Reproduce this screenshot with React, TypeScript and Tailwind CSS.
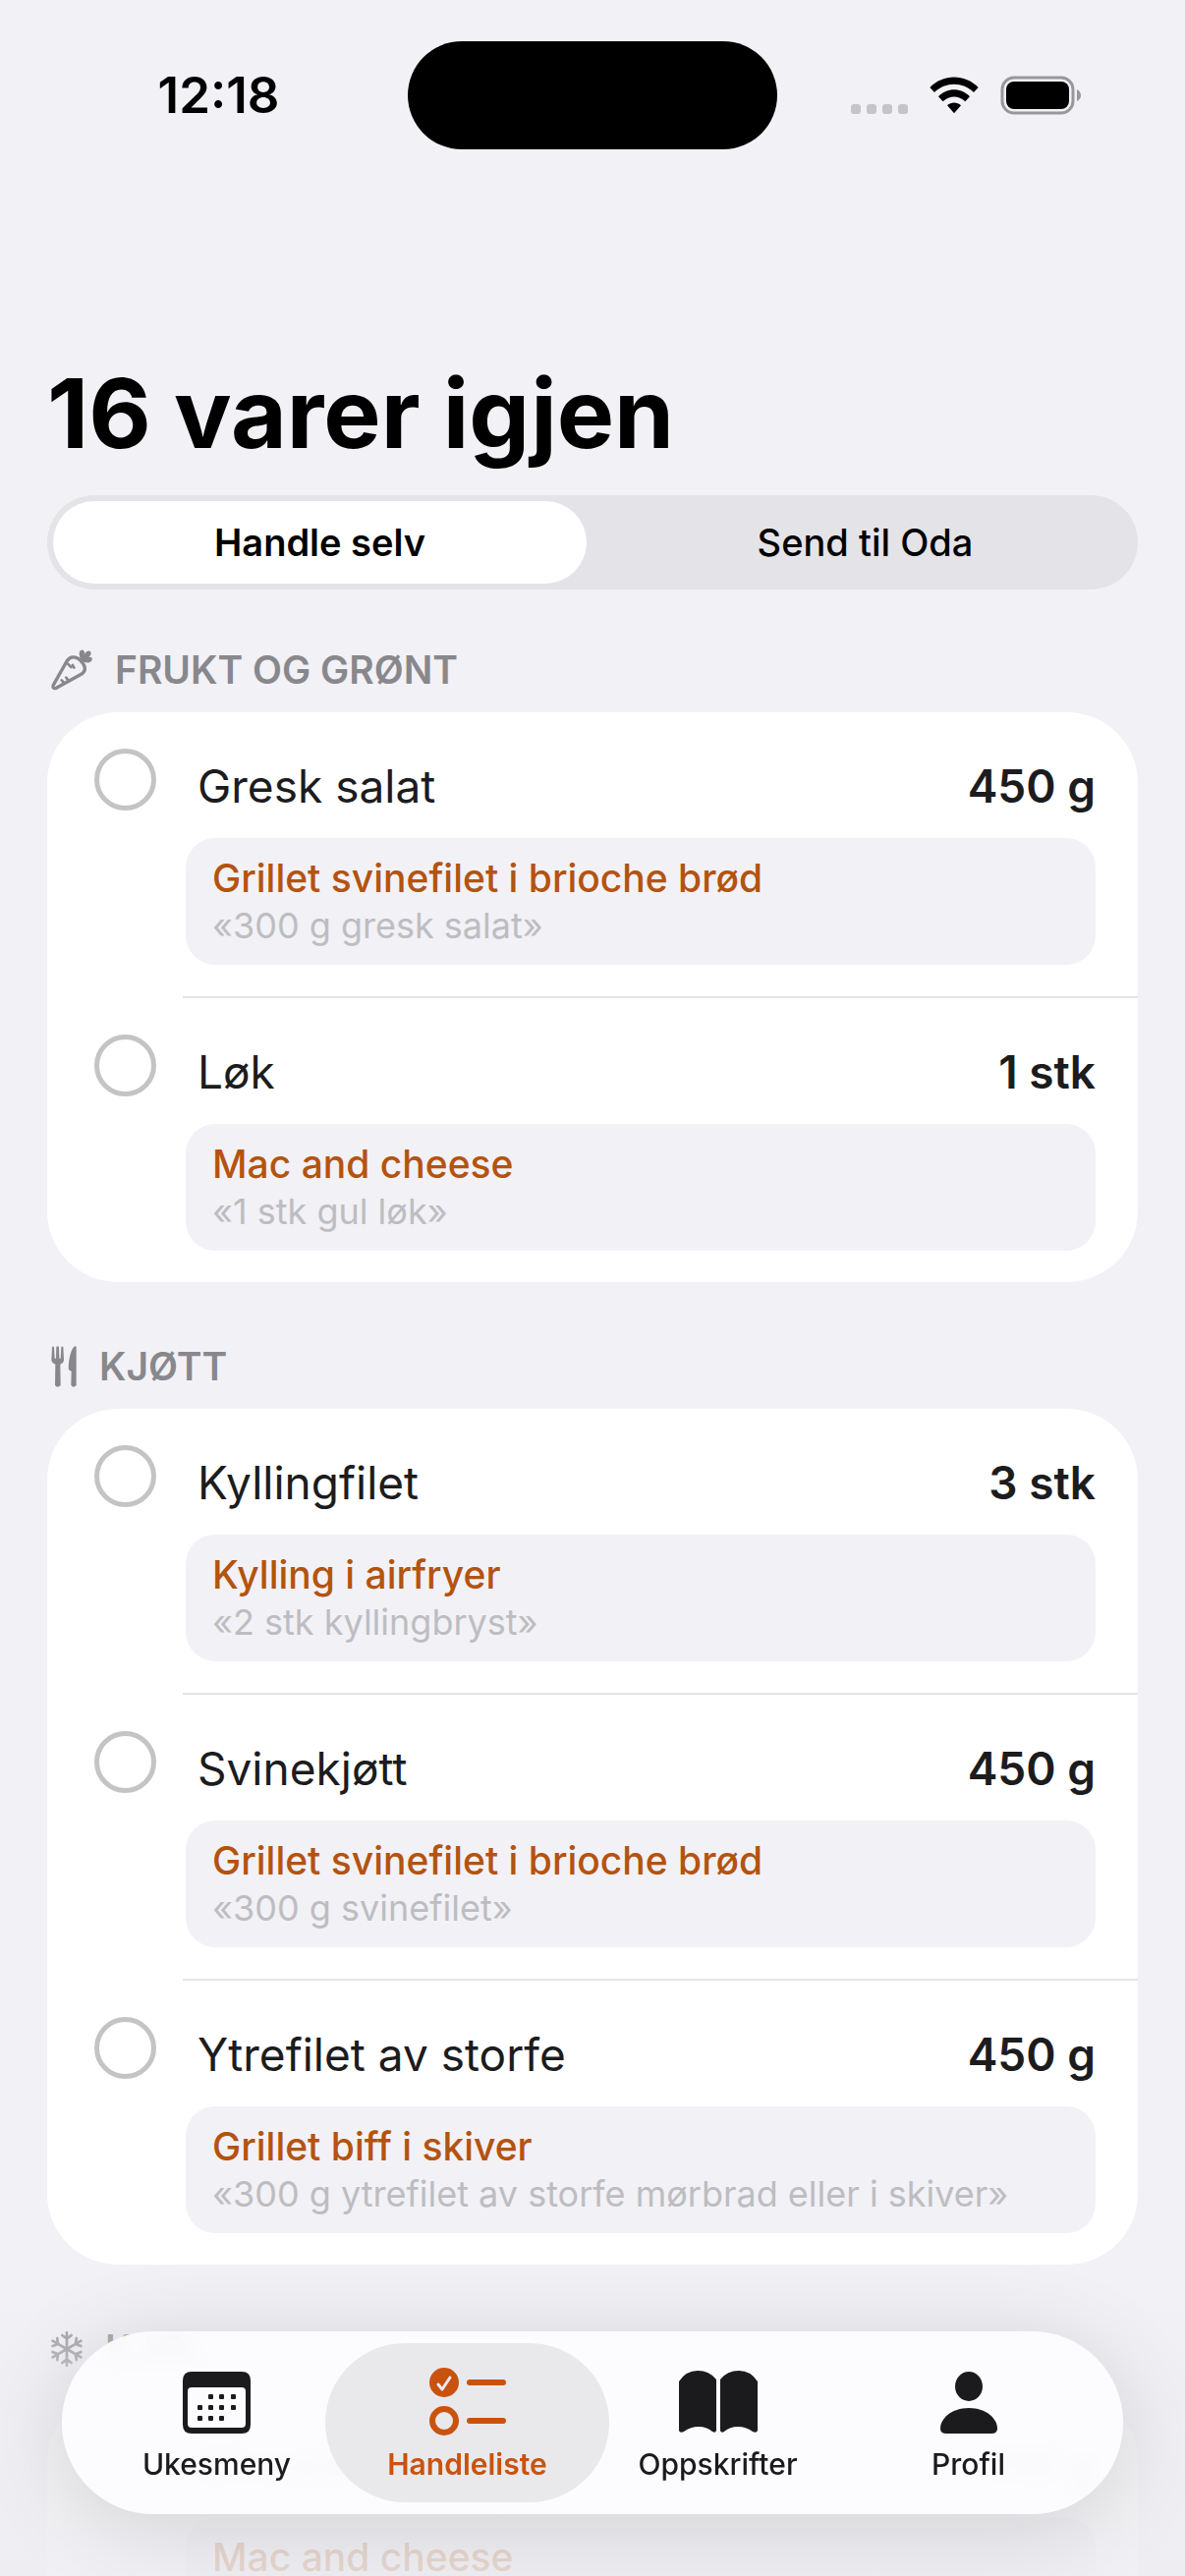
import { useState, type ReactNode } from "react";

type Item = {
  name: string;
  amount: string;
  recipe: string;
  quote?: string;
};

type Section = {
  title: string;
  icon: ReactNode;
  items: Item[];
};

function CarrotIcon() {
  return (
    <svg width="42" height="42" viewBox="0 0 126 126" fill="none" stroke="currentColor" strokeWidth="10" strokeLinecap="round" strokeLinejoin="round">
      <path d="M48 36 C58 20 76 20 90 34 C106 50 108 66 92 76 L16 118 C8 121 3 116 8 107 Z" />
      <path d="M51 44 L61 54 M66 48 L70 56 M32 94 L38 100 M46 86 L52 94" strokeWidth="8" />
      <path d="M92 34 C84 20 84 4 92 2 C99 0 103 6 102 14 C108 4 118 2 121 8 C124 14 120 20 114 24 C122 22 127 27 125 32 C122 42 104 44 92 34 Z" fill="currentColor" stroke="none" />
    </svg>
  );
}

function CutleryIcon() {
  return (
    <svg width="26" height="42" viewBox="0 0 78 126" fill="currentColor">
      <path d="M3 2 Q6 0 9 3 L11 38 H15 L16 3 Q20 -1 24 3 L25 38 H29 L31 3 Q34 0 37 2 L39 42 Q39 51 28 56 L29 120 Q20 130 12 120 L13 56 Q1 51 1 42 Z" />
      <path d="M77 4 V120 Q69 130 61 120 L62 77 L56 74 Q53 72 53 66 C54 36 61 12 70 2 Q77 -2 77 4 Z" />
    </svg>
  );
}

function SnowflakeIcon() {
  return (
    <svg width="32" height="36" viewBox="0 0 96 108" fill="none" stroke="currentColor" strokeWidth="8" strokeLinecap="round">
      {[0, 60, 120, 180, 240, 300].map((angle) => (
        <g key={angle} transform={`rotate(${angle} 48 54)`}>
          <path d="M48 54 V4 M34 12 L48 23 L62 12" />
        </g>
      ))}
    </svg>
  );
}

function CalendarIcon() {
  return (
    <svg width="69" height="63" viewBox="0 0 69 63" fill="currentColor">
      <path
        fillRule="evenodd"
        d="M9 0 H60 Q69 0 69 9 V54 Q69 63 60 63 H9 Q0 63 0 54 V9 Q0 0 9 0 Z M9 16 Q5 16 5 20 V53 Q5 57 9 57 H60 Q64 57 64 53 V20 Q64 16 60 16 Z"
      />
      {[
        [26, 23], [37, 23], [49, 23],
        [15, 34], [26, 34], [37, 34], [49, 34],
        [15, 45], [26, 45], [37, 45],
      ].map(([x, y]) => (
        <rect key={`${x}-${y}`} x={x} y={y} width="5" height="5" rx="1" />
      ))}
    </svg>
  );
}

function ChecklistIcon() {
  return (
    <svg width="78" height="70" viewBox="0 0 78 70" fill="none" stroke="currentColor" strokeLinecap="round" strokeLinejoin="round">
      <circle cx="15" cy="15" r="15" fill="currentColor" stroke="none" />
      <path d="M9 17 L13 22 L21 10" stroke="#e9e9ec" strokeWidth="3" />
      <circle cx="15" cy="54" r="12" strokeWidth="6" />
      <path d="M41 15 H75 M41 54 H75" strokeWidth="6" />
    </svg>
  );
}

function BookIcon() {
  return (
    <svg width="80" height="64" viewBox="0 0 80 64" fill="currentColor">
      <path d="M0 11 Q7 0 19 0 Q31 0 38 9 V61 Q37 64 34 62 Q28 57 20 57 Q12 57 5 62 Q1 64 0 61 Z" />
      <path d="M42 9 Q49 0 61 0 Q73 0 80 11 V61 Q79 64 75 62 Q68 57 60 57 Q52 57 46 62 Q43 64 42 61 Z" />
    </svg>
  );
}

function PersonIcon() {
  return (
    <svg width="58" height="63" viewBox="0 0 58 63" fill="currentColor">
      <ellipse cx="29" cy="15" rx="14" ry="15" />
      <path d="M29 37 C47 37 58 48 58 58 Q58 63 52 63 H6 Q0 63 0 58 C0 48 11 37 29 37 Z" />
    </svg>
  );
}

function StatusIcons() {
  return (
    <div className="flex items-center gap-[22px]">
      <svg width="58" height="40" viewBox="0 0 58 40" fill="#c5c5c9">
        {[0, 16, 32, 48].map((x) => (
          <rect key={x} x={x} y="29" width="10" height="10" rx="3" />
        ))}
      </svg>
      <svg width="50" height="38" viewBox="0 0 150 112">
        <path d="M1 32 C42 -10 108 -10 149 32 L135 47 C102 14 48 14 15 47 Z" />
        <path d="M27 60 C54 32 96 32 123 60 L109 75 C89 56 61 56 41 75 Z" />
        <path d="M54 87 C66 76 84 76 96 87 L75 111 Z" />
      </svg>
      <svg width="83" height="40" viewBox="0 0 83 40">
        <rect x="2" y="2" width="72" height="36" rx="12" fill="none" stroke="#98989c" strokeWidth="3" />
        <rect x="6" y="6" width="64" height="28" rx="8" />
        <path d="M78 14 Q82 16 82 20 Q82 24 78 26 Z" fill="#98989c" />
      </svg>
    </div>
  );
}

const sections: Section[] = [
  {
    title: "FRUKT OG GRØNT",
    icon: <CarrotIcon />,
    items: [
      { name: "Gresk salat", amount: "450 g", recipe: "Grillet svinefilet i brioche brød", quote: "«300 g gresk salat»" },
      { name: "Løk", amount: "1 stk", recipe: "Mac and cheese", quote: "«1 stk gul løk»" },
    ],
  },
  {
    title: "KJØTT",
    icon: <CutleryIcon />,
    items: [
      { name: "Kyllingfilet", amount: "3 stk", recipe: "Kylling i airfryer", quote: "«2 stk kyllingbryst»" },
      { name: "Svinekjøtt", amount: "450 g", recipe: "Grillet svinefilet i brioche brød", quote: "«300 g svinefilet»" },
      { name: "Ytrefilet av storfe", amount: "450 g", recipe: "Grillet biff i skiver", quote: "«300 g ytrefilet av storfe mørbrad eller i skiver»" },
    ],
  },
  {
    title: "KJØL",
    icon: <SnowflakeIcon />,
    items: [{ name: "Cheddar", amount: "110 g", recipe: "Mac and cheese" }],
  },
];

const tabs = [
  { label: "Ukesmeny", icon: <CalendarIcon />, active: false },
  { label: "Handleliste", icon: <ChecklistIcon />, active: true },
  { label: "Oppskrifter", icon: <BookIcon />, active: false },
  { label: "Profil", icon: <PersonIcon />, active: false },
];

const modes = ["Handle selv", "Send til Oda"];

function ItemRow({ item, id }: { item: Item; id: string }) {
  return (
    <li className="group flex items-start pl-12">
      <input
        id={id}
        type="checkbox"
        className="mt-[37px] mr-[27px] size-[63px] shrink-0 appearance-none rounded-full border-[5px] border-[#c4c4c4] checked:bg-[#c4500c]"
      />
      <div className="min-w-0 flex-1 border-b-2 border-[#e4e4e6] pt-[45px] pr-[43px] pb-8 group-last:border-b-0">
        <div className="flex items-center justify-between pl-[15px] text-[46px] leading-[60px] text-[#1c1c1e]">
          <label htmlFor={id}>{item.name}</label>
          <span className="font-semibold">{item.amount}</span>
        </div>
        <div className="mt-[23px] ml-[3px] min-h-[129px] rounded-[30px] bg-[#f2f1f6] px-[27px] pt-[17px] pb-4 leading-[48px]">
          <a href="#oppskrift" className="block text-[39px] font-medium text-[#b4530f]">
            {item.recipe}
          </a>
          {item.quote && <p className="text-[36px] text-[#bdbdc1]">{item.quote}</p>}
        </div>
      </div>
    </li>
  );
}

export default function App() {
  const [mode, setMode] = useState(modes[0]);

  return (
    <div className="relative h-screen overflow-hidden bg-[#f2f1f6] font-[Inter,'Liberation_Sans',sans-serif] text-black">
      {/* Status bar */}
      <header className="grid grid-cols-[1fr_376px_1fr] items-center pt-[42px]">
        <span className="pl-[30px] text-center text-[51px] leading-[60px] font-semibold">12:18</span>
        <div className="h-[110px] rounded-full bg-black" />
        <div className="flex justify-end pr-[105px]">
          <StatusIcons />
        </div>
      </header>

      <main className="px-12">
        <h1 className="mt-[209px] text-[98px] leading-[120px] font-bold">16 varer igjen</h1>

        <div className="mt-[23px] flex gap-3 rounded-full bg-[#e4e3e8] p-[6px]">
          {modes.map((m) => (
            <button
              key={m}
              type="button"
              aria-pressed={mode === m}
              onClick={() => setMode(m)}
              className={
                mode === m
                  ? "h-[84px] flex-1 rounded-full bg-white text-[38px] font-semibold"
                  : "h-[84px] flex-1 rounded-full text-[38px] font-medium"
              }
            >
              {m}
            </button>
          ))}
        </div>

        {/* Shopping list */}
        <div className="mt-[58px] flex flex-col gap-[62px]">
          {sections.map((section) => (
            <section key={section.title}>
              <h2 className="mb-[19px] flex h-12 items-center gap-[23px] pl-1 text-[39px] font-semibold text-[#88888c]">
                {section.icon}
                {section.title}
              </h2>
              <ul className="rounded-[72px] bg-white">
                {section.items.map((item) => (
                  <ItemRow key={item.name} item={item} id={`${section.title}-${item.name}`} />
                ))}
              </ul>
            </section>
          ))}
        </div>
      </main>

      {/* Content fades out behind the tab bar */}
      <div className="pointer-events-none absolute inset-x-0 bottom-0 h-[310px] bg-linear-to-b from-[#f0f0f4]/0 via-[#efeff3]/75 via-45% to-[#eeeef2]/85" />

      <nav className="absolute inset-x-[63px] bottom-[63px] flex h-[186px] rounded-full bg-[#fdfdff]/90 px-[30px] py-3 shadow-[0_12px_90px_rgba(0,0,0,0.13)] backdrop-blur-[8px]">
        {tabs.map((tab) => (
          <a
            key={tab.label}
            href={`#${tab.label.toLowerCase()}`}
            className={
              tab.active
                ? "relative flex flex-1 flex-col items-center font-semibold text-[#c9530e]"
                : "relative flex flex-1 flex-col items-center font-medium text-[#1b1b1e]"
            }
          >
            {tab.active && <span className="absolute -inset-x-[17px] inset-y-0 rounded-full bg-[#e9e9ec]" />}
            <span className="relative flex h-[120px] items-center [&>svg]:block">{tab.icon}</span>
            <span className="relative -mt-[15px] text-[30px] leading-9">{tab.label}</span>
          </a>
        ))}
      </nav>
    </div>
  );
}
